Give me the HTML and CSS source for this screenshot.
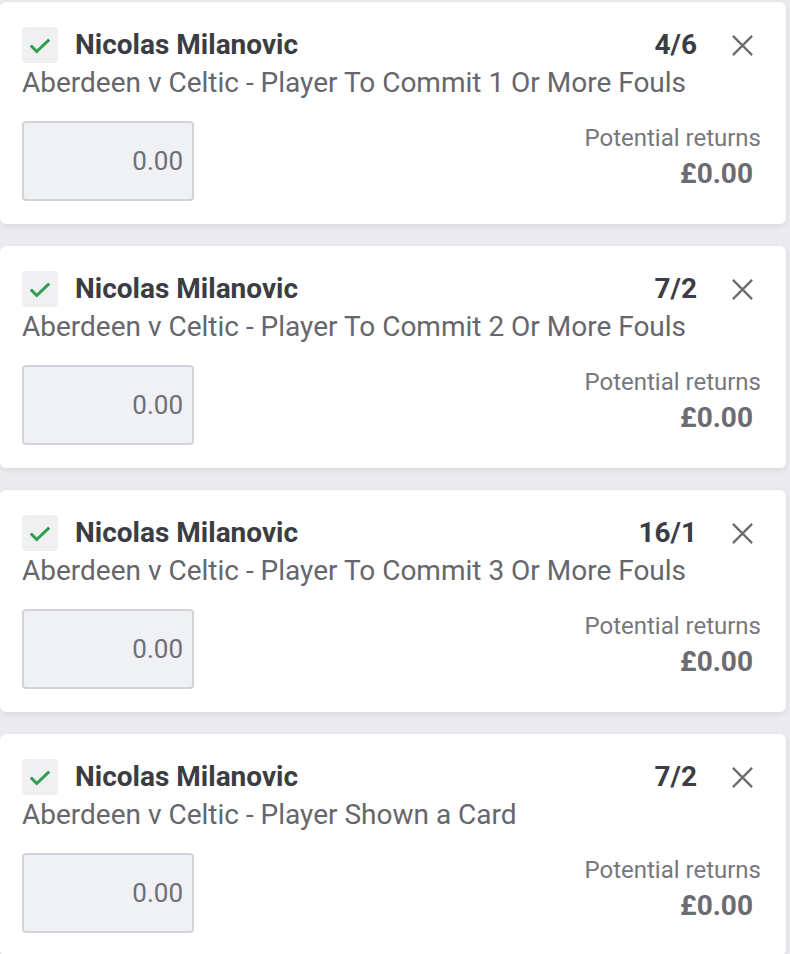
FILE: index.html
```html
<!DOCTYPE html>
<html>
<head>
<meta charset="utf-8">
<link rel="stylesheet" href="styles.css">
</head>
<body>
<div class="list">
  <div class="card">
    <div class="top">
      <span class="check"><svg viewBox="0 0 24 24" width="26" height="26"><path d="M3.5 12.5l5.5 5.5L20.5 7" fill="none" stroke="#2f9e4e" stroke-width="2.8"/></svg></span>
      <span class="name">Nicolas Milanovic</span>
      <span class="odds">4/6</span>
      <span class="close"><svg viewBox="0 0 24 24" width="23" height="23"><path d="M2 2L22 22M22 2L2 22" stroke="#6b6b70" stroke-width="2.4"/></svg></span>
    </div>
    <div class="desc">Aberdeen v Celtic - Player To Commit 1 Or More Fouls</div>
    <div class="bottom">
      <div class="stake">0.00</div>
      <div class="returns"><div class="rl">Potential returns</div><div class="rv">£0.00</div></div>
    </div>
  </div>
  <div class="card">
    <div class="top">
      <span class="check"><svg viewBox="0 0 24 24" width="26" height="26"><path d="M3.5 12.5l5.5 5.5L20.5 7" fill="none" stroke="#2f9e4e" stroke-width="2.8"/></svg></span>
      <span class="name">Nicolas Milanovic</span>
      <span class="odds">7/2</span>
      <span class="close"><svg viewBox="0 0 24 24" width="23" height="23"><path d="M2 2L22 22M22 2L2 22" stroke="#6b6b70" stroke-width="2.4"/></svg></span>
    </div>
    <div class="desc">Aberdeen v Celtic - Player To Commit 2 Or More Fouls</div>
    <div class="bottom">
      <div class="stake">0.00</div>
      <div class="returns"><div class="rl">Potential returns</div><div class="rv">£0.00</div></div>
    </div>
  </div>
  <div class="card">
    <div class="top">
      <span class="check"><svg viewBox="0 0 24 24" width="26" height="26"><path d="M3.5 12.5l5.5 5.5L20.5 7" fill="none" stroke="#2f9e4e" stroke-width="2.8"/></svg></span>
      <span class="name">Nicolas Milanovic</span>
      <span class="odds">16/1</span>
      <span class="close"><svg viewBox="0 0 24 24" width="23" height="23"><path d="M2 2L22 22M22 2L2 22" stroke="#6b6b70" stroke-width="2.4"/></svg></span>
    </div>
    <div class="desc">Aberdeen v Celtic - Player To Commit 3 Or More Fouls</div>
    <div class="bottom">
      <div class="stake">0.00</div>
      <div class="returns"><div class="rl">Potential returns</div><div class="rv">£0.00</div></div>
    </div>
  </div>
  <div class="card">
    <div class="top">
      <span class="check"><svg viewBox="0 0 24 24" width="26" height="26"><path d="M3.5 12.5l5.5 5.5L20.5 7" fill="none" stroke="#2f9e4e" stroke-width="2.8"/></svg></span>
      <span class="name">Nicolas Milanovic</span>
      <span class="odds">7/2</span>
      <span class="close"><svg viewBox="0 0 24 24" width="23" height="23"><path d="M2 2L22 22M22 2L2 22" stroke="#6b6b70" stroke-width="2.4"/></svg></span>
    </div>
    <div class="desc">Aberdeen v Celtic - Player Shown a Card</div>
    <div class="bottom">
      <div class="stake">0.00</div>
      <div class="returns"><div class="rl">Potential returns</div><div class="rv">£0.00</div></div>
    </div>
  </div>
</div>
</body>
</html>
```
FILE: styles.css
```css
html, body {
  margin: 0;
  padding: 0;
  background: #ebebef;
  font-family: Roboto, "Liberation Sans", sans-serif;
}
.list {
  display: flex;
  flex-direction: column;
  gap: 22px;
  padding-top: 2px;
  width: 786px;
}
.card {
  background: #fff;
  border-radius: 6px;
  height: 222px;
  box-sizing: border-box;
  padding: 25px 25px 0 22px;
  box-shadow: 0 2px 6px rgba(0,0,0,0.08);
}
.top {
  display: flex;
  align-items: center;
  height: 36px;
  padding-right: 7px;
}
.check {
  width: 36px;
  height: 36px;
  border-radius: 4px;
  background: #f0f0f3;
  display: flex;
  align-items: center;
  justify-content: center;
}
.name {
  margin-left: 17px;
  margin-bottom: 2px;
  font-size: 28px;
  font-weight: 700;
  color: #3c3c44;
  flex: 1;
}
.odds {
  margin-bottom: 2px;
  font-size: 28px;
  font-weight: 700;
  color: #3c3c44;
}
.close {
  margin-left: 34px;
  width: 23px;
  height: 23px;
  display: flex;
}
.desc {
  margin-top: 4px;
  font-size: 28px;
  color: #66666c;
  line-height: 32px;
}
.bottom {
  display: flex;
  justify-content: space-between;
  margin-top: 22px;
}
.stake {
  width: 172px;
  height: 80px;
  box-sizing: border-box;
  border: 2px solid #d2d3d8;
  border-radius: 4px;
  background: #f0f1f5;
  font-size: 26px;
  color: #6f6f75;
  display: flex;
  align-items: center;
  justify-content: flex-end;
  padding-right: 9px;
}
.returns {
  text-align: right;
  margin-top: 3px;
}
.rl {
  font-size: 24px;
  color: #77777c;
  line-height: 28px;
}
.rv {
  font-size: 28px;
  font-weight: 700;
  color: #6b6b73;
  line-height: 44px;
  margin-right: 8px;
}
```
